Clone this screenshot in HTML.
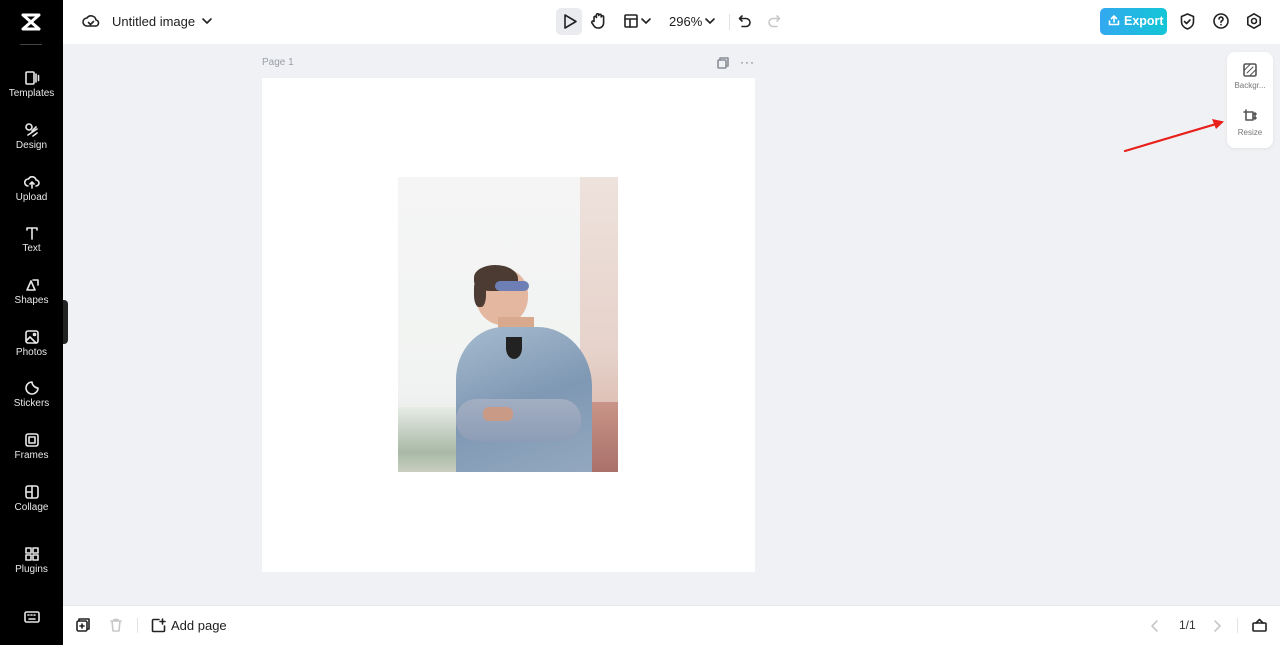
<!DOCTYPE html>
<html><head><meta charset="utf-8"><style>
*{margin:0;padding:0;box-sizing:border-box}
body{width:1280px;height:645px;overflow:hidden;background:#eff1f4;font-family:"Liberation Sans",sans-serif;position:relative}
.sb{position:absolute;left:0;top:0;width:63px;height:645px;background:#000;color:#fff}
.it{position:absolute;left:0;width:63px;text-align:center;font-size:10px;color:#e8e8e8}
.it svg{display:block;margin:0 auto 2px}
.top{position:absolute;left:63px;top:0;right:0;height:44px;background:#fff}
.bot{position:absolute;left:63px;bottom:0;right:0;height:40px;background:#fff;border-top:1px solid #e6e8eb}
.abs{position:absolute}
svg{fill:none;stroke:currentColor;stroke-width:1.6;stroke-linecap:round;stroke-linejoin:round}
</style></head><body>
<div class="sb">
<svg class="abs" style="left:20px;top:12px" width="22" height="20" viewBox="0 0 22 20"><path d="M3 3h16l-16 14h16M3 3l16 14" stroke="#fff" stroke-width="3"/></svg>
<div class="abs" style="left:20px;top:44px;width:22px;height:1px;background:#444"></div>
<div class="it" style="top:70px"><svg width="16" height="16" viewBox="0 0 16 16"><rect x="2" y="2" width="8" height="12" rx="1"/><path d="M12 4v8M14.5 5.5v5"/></svg>Templates</div>
<div class="it" style="top:122px"><svg width="16" height="16" viewBox="0 0 16 16"><circle cx="5" cy="5" r="3"/><path d="M8 9l4-4M4 13l9-6M9 14l4-3"/></svg>Design</div>
<div class="it" style="top:174px"><svg width="16" height="16" viewBox="0 0 16 16"><path d="M4 12a3.5 3.5 0 0 1 .5-7 4 4 0 0 1 7.5 1 3 3 0 0 1 0 6M8 8v6M6 10l2-2 2 2"/></svg>Upload</div>
<div class="it" style="top:225px"><svg width="16" height="16" viewBox="0 0 16 16"><path d="M3 3h10M8 3v11M3 3v2M13 3v2"/></svg>Text</div>
<div class="it" style="top:277px"><svg width="16" height="16" viewBox="0 0 16 16"><path d="M3 13l4-9 4 9zM9 3h5v5"/></svg>Shapes</div>
<div class="it" style="top:329px"><svg width="16" height="16" viewBox="0 0 16 16"><rect x="2" y="2" width="12" height="12" rx="2"/><path d="M2 12l4-4 6 6"/><circle cx="10.5" cy="5.5" r="1"/></svg>Photos</div>
<div class="it" style="top:380px"><svg width="16" height="16" viewBox="0 0 16 16"><path d="M14 8A6 6 0 1 1 8 2c0 3 3 6 6 6z"/></svg>Stickers</div>
<div class="it" style="top:432px"><svg width="16" height="16" viewBox="0 0 16 16"><rect x="2" y="2" width="12" height="12" rx="2"/><rect x="5" y="5" width="6" height="6"/></svg>Frames</div>
<div class="it" style="top:484px"><svg width="16" height="16" viewBox="0 0 16 16"><rect x="2" y="2" width="12" height="12" rx="2"/><path d="M8 2v12M2 8h6"/></svg>Collage</div>
<div class="it" style="top:546px"><svg width="16" height="16" viewBox="0 0 16 16"><rect x="2" y="2" width="5" height="5"/><rect x="9" y="2" width="5" height="5"/><rect x="2" y="9" width="5" height="5"/><rect x="9" y="9" width="5" height="5"/></svg>Plugins</div>
<div class="it" style="top:610px"><svg width="16" height="14" viewBox="0 0 16 14"><rect x="1" y="2" width="14" height="10" rx="1.5"/><path d="M4 5h1M7 5h1M10 5h1M5 9h6"/></svg></div>
</div>
<div class="abs" style="left:63px;top:300px;width:5px;height:44px;background:#222;border-radius:0 4px 4px 0"></div>
<div class="top">
<svg class="abs" style="left:19px;top:13px;color:#222" width="18" height="16" viewBox="0 0 18 16"><path d="M5 13a4 4 0 0 1 0-8 5 5 0 0 1 9 2 3 3 0 0 1-1 6z M6.5 9.5l2 2 3-3"/></svg>
<div class="abs" style="left:49px;top:14px;font-size:13px;color:#1d1d1d">Untitled image</div>
<svg class="abs" style="left:138px;top:16px;color:#222" width="12" height="10" viewBox="0 0 12 10"><path d="M2 3l4 4 4-4"/></svg>
<div class="abs" style="left:493px;top:8px;width:26px;height:27px;background:#e9ebef;border-radius:5px"></div>
<svg class="abs" style="left:499px;top:13px;color:#222" width="16" height="17" viewBox="0 0 16 17"><path d="M3 2l11 6.5-11 6.5z"/></svg>
<svg class="abs" style="left:527px;top:12px;color:#222" width="16" height="18" viewBox="0 0 16 18"><path d="M4 9V5.5a1.2 1.2 0 0 1 2.4 0V3a1.2 1.2 0 0 1 2.4 0v.5a1.2 1.2 0 0 1 2.4 0V5a1.2 1.2 0 0 1 2.4 0v6a5 5 0 0 1-5 5H8a5 5 0 0 1-4-2L2 11a1.2 1.2 0 0 1 2-1.5z"/></svg>
<svg class="abs" style="left:561px;top:14px;color:#222" width="14" height="14" viewBox="0 0 14 14"><rect x="1" y="1" width="12" height="12" rx="1"/><path d="M1 5h12M6 5v8"/></svg>
<svg class="abs" style="left:577px;top:16px;color:#222" width="12" height="10" viewBox="0 0 12 10"><path d="M2 3l4 4 4-4"/></svg>
<div class="abs" style="left:606px;top:14px;font-size:13px;color:#1d1d1d">296%</div>
<svg class="abs" style="left:641px;top:16px;color:#222" width="12" height="10" viewBox="0 0 12 10"><path d="M2 3l4 4 4-4"/></svg>
<div class="abs" style="left:666px;top:14px;width:1px;height:16px;background:#e3e3e3"></div>
<svg class="abs" style="left:675px;top:13px;color:#222" width="14" height="16" viewBox="0 0 14 16"><path d="M4 3L1.5 5.5 4 8M1.5 5.5H8a4 4 0 0 1 0 8H4"/></svg>
<svg class="abs" style="left:704px;top:13px;color:#c8c8c8" width="14" height="16" viewBox="0 0 14 16"><path d="M10 3l2.5 2.5L10 8M12.5 5.5H6a4 4 0 0 0 0 8h4"/></svg>
<div class="abs" style="left:1037px;top:8px;width:67px;height:27px;border-radius:5px;background:linear-gradient(90deg,#33a8f0,#12c6d6);color:#fff;font-weight:bold;font-size:12.5px;line-height:27px;padding-left:24px">Export</div>
<svg class="abs" style="left:1045px;top:14px;color:#fff" width="12" height="12" viewBox="0 0 12 12"><path d="M6 8V2M3.5 4.5L6 2l2.5 2.5M1.5 7v3.5h9V7"/></svg>
<svg class="abs" style="left:1116px;top:12px;color:#222" width="17" height="19" viewBox="0 0 17 19"><path d="M8.5 2l6 2.5v5c0 4-3 6.5-6 7.5-3-1-6-3.5-6-7.5v-5z M5.5 9.5l2 2 3.5-3.5"/></svg>
<svg class="abs" style="left:1149px;top:12px;color:#222" width="18" height="18" viewBox="0 0 18 18"><circle cx="9" cy="9" r="7"/><path d="M7 7a2 2 0 1 1 2.5 2c-.5.2-.5.6-.5 1.2M9 12.5v.3"/></svg>
<svg class="abs" style="left:1182px;top:12px;color:#222" width="18" height="18" viewBox="0 0 18 18"><path d="M9 1.8l6.2 3.6v7.2L9 16.2l-6.2-3.6V5.4z"/><circle cx="9" cy="9" r="2.5"/></svg>
</div>
<div class="abs" style="left:262px;top:57px;font-size:10px;color:#9a9ea6">Page 1</div>
<svg class="abs" style="left:717px;top:57px;color:#8a8e96" width="12" height="12" viewBox="0 0 12 12"><rect x="1" y="3" width="8" height="8" rx="1"/><path d="M3 3V1h8v8H9"/></svg>
<div class="abs" style="left:740px;top:55px;font-size:12px;color:#666;letter-spacing:1px">···</div>
<div class="abs" style="left:262px;top:78px;width:493px;height:494px;background:#fff"></div>
<div class="abs" style="left:398px;top:177px;width:220px;height:295px;overflow:hidden;background:linear-gradient(180deg,#f4f5f4 0%,#f1f3f2 70%,#e4e7e3 100%)">
  <div class="abs" style="left:182px;top:0;width:38px;height:295px;background:linear-gradient(180deg,#eee2dc,#e6d2ca 60%,#d2a89c)"></div>
  <div class="abs" style="left:0;top:230px;width:60px;height:65px;background:linear-gradient(180deg,#e6ece6,#a9b9a6 70%,#c9cfc0)"></div>
  <div class="abs" style="left:188px;top:225px;width:32px;height:70px;background:linear-gradient(180deg,#c99488,#a9716a)"></div>
  <div class="abs" style="left:78px;top:92px;width:52px;height:56px;border-radius:45% 45% 50% 50%;background:#e4b8a0"></div>
  <div class="abs" style="left:76px;top:88px;width:44px;height:26px;border-radius:50% 55% 10% 40%;background:#4b3b33"></div>
  <div class="abs" style="left:76px;top:100px;width:12px;height:30px;border-radius:40%;background:#4b3b33"></div>
  <div class="abs" style="left:97px;top:104px;width:34px;height:10px;background:#6e7fb5;border-radius:5px"></div>
  <div class="abs" style="left:100px;top:140px;width:36px;height:40px;background:#d9a98e"></div>
  <div class="abs" style="left:58px;top:150px;width:136px;height:150px;border-radius:35% 40% 0 0;background:linear-gradient(160deg,#a6bbcf,#7f98b3 50%,#94a9c0)"></div>
  <div class="abs" style="left:108px;top:160px;width:16px;height:22px;background:#222;border-radius:0 0 50% 50%"></div>
  <div class="abs" style="left:58px;top:222px;width:125px;height:42px;border-radius:20px;background:linear-gradient(180deg,#a2aec2,#8e9db6)"></div>
  <div class="abs" style="left:85px;top:230px;width:30px;height:14px;border-radius:6px;background:#c99a86"></div>
</div>
<div class="abs" style="left:1227px;top:52px;width:46px;height:96px;background:#fff;border-radius:8px;box-shadow:0 1px 4px rgba(0,0,0,.06)"></div>
<svg class="abs" style="left:1243px;top:63px;color:#555" width="14" height="14" viewBox="0 0 14 14"><rect x="1" y="1" width="12" height="12" rx="1.5"/><path d="M4 10l6-6M1.5 7l5.5-5.5M7 12.5l5.5-5.5" stroke-width="1"/></svg>
<div class="abs" style="left:1227px;top:81px;width:46px;text-align:center;font-size:8px;color:#777">Backgr...</div>
<svg class="abs" style="left:1243px;top:109px;color:#555" width="14" height="14" viewBox="0 0 14 14"><path d="M3 1v2H1M3 3h7v8H3zM12 4v6M11 5l1-1 1 1M11 9l1 1 1-1"/></svg>
<div class="abs" style="left:1227px;top:128px;width:46px;text-align:center;font-size:8px;color:#777">Resize</div>
<svg class="abs" style="left:1120px;top:115px" width="110" height="40" viewBox="0 0 110 40"><path d="M5 36L96 9" stroke="#e8201a" stroke-width="2.2"/><path d="M104 6.5L92 4l4 10z" fill="#e8201a" stroke="none"/></svg>
<div class="bot">
<svg class="abs" style="left:13px;top:12px;color:#222" width="14" height="14" viewBox="0 0 14 14"><rect x="1" y="3" width="10" height="10" rx="1.5"/><path d="M3 3V1h10v10h-2M6 6v4M4 8h4"/></svg>
<svg class="abs" style="left:46px;top:12px;color:#c8c8c8" width="14" height="14" viewBox="0 0 14 14"><path d="M2 3h10M5 3V1.5h4V3M3 3l1 10h6l1-10"/></svg>
<div class="abs" style="left:74px;top:12px;width:1px;height:15px;background:#e3e3e3"></div>
<svg class="abs" style="left:88px;top:12px;color:#222" width="15" height="15" viewBox="0 0 15 15"><path d="M8 1.5H2.5a1 1 0 0 0-1 1v10a1 1 0 0 0 1 1h10a1 1 0 0 0 1-1V8M11.5 1v5M9 3.5h5"/></svg>
<div class="abs" style="left:108px;top:12px;font-size:13px;color:#1d1d1d">Add page</div>
<svg class="abs" style="left:1087px;top:13px;color:#c8c8c8" width="10" height="14" viewBox="0 0 10 14"><path d="M7 2L2 7l5 5"/></svg>
<div class="abs" style="left:1116px;top:12px;font-size:12px;color:#333">1/1</div>
<svg class="abs" style="left:1149px;top:13px;color:#c8c8c8" width="10" height="14" viewBox="0 0 10 14"><path d="M3 2l5 5-5 5"/></svg>
<div class="abs" style="left:1174px;top:12px;width:1px;height:15px;background:#e3e3e3"></div>
<svg class="abs" style="left:1189px;top:12px;color:#222" width="15" height="14" viewBox="0 0 15 14"><rect x="1" y="5" width="13" height="8" rx="1"/><path d="M4 5l3.5-3.5L11 5"/></svg>
</div>
</body></html>
